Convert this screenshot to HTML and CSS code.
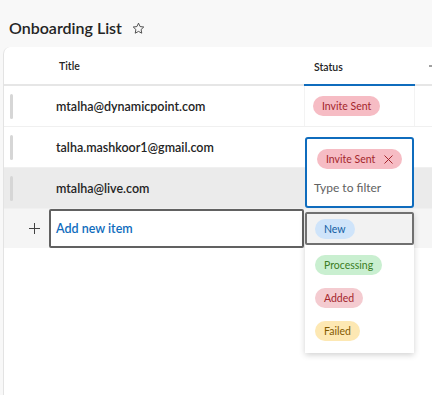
FILE: index.html
```html
<!DOCTYPE html>
<html lang="en">
<head>
  <meta charset="UTF-8">
  <title>Onboarding List</title>
  <link rel="stylesheet" href="styles.css">
</head>
<body>
  <div class="page-head">
    <h1>Onboarding List</h1>
    <svg class="star" width="13" height="13" viewBox="0 0 20 20">
      <path d="M10 1.8l2.45 5.2 5.65.7-4.15 3.9 1.05 5.6L10 14.45 4.95 17.2 6 11.6 1.9 7.7l5.65-.7z" fill="none" stroke="#424242" stroke-width="1.4" stroke-linejoin="round"/>
    </svg>
  </div>

  <div class="card">
    <div class="row head-row">
      <div class="cell"></div>
      <div class="cell col-title">Title</div>
      <div class="cell col-status active">Status</div>
      <div class="cell col-add">
        <svg width="12" height="12" viewBox="0 0 12 12"><path d="M6 0v12M0 6h12" stroke="#424242" stroke-width="1"/></svg>
      </div>
    </div>

    <div class="row">
      <div class="cell"><span class="sel-bar"></span></div>
      <div class="cell name">mtalha@dynamicpoint.com</div>
      <div class="cell status framed"><span class="pill pink">Invite Sent</span></div>
      <div class="cell"></div>
    </div>

    <div class="row">
      <div class="cell"><span class="sel-bar"></span></div>
      <div class="cell name">talha.mashkoor1@gmail.com</div>
      <div class="cell status"><span class="pill pink">Invite Sent</span></div>
      <div class="cell"></div>
    </div>

    <div class="row selected">
      <div class="cell"><span class="sel-bar"></span></div>
      <div class="cell name">mtalha@live.com</div>
      <div class="cell status"></div>
      <div class="cell"></div>
    </div>

    <div class="row add-row">
      <div class="cell plus">
        <svg width="11" height="11" viewBox="0 0 11 11"><path d="M5.5 0v11M0 5.5h11" stroke="#424242" stroke-width="1"/></svg>
      </div>
      <div class="cell add-box">Add new item</div>
      <div class="cell"></div>
      <div class="cell"></div>
    </div>

    <div class="picker">
      <div class="filter">
        <span class="pill pink">Invite Sent
          <svg class="x" width="9" height="9" viewBox="0 0 9 9"><path d="M.5.5l8 8M8.5.5l-8 8" stroke="#a4262c" stroke-width="1"/></svg>
        </span>
        <div class="placeholder">Type to filter</div>
      </div>
      <ul class="options">
        <li class="option focused"><span class="pill blue">New</span></li>
        <li class="option"><span class="pill green">Processing</span></li>
        <li class="option"><span class="pill rose">Added</span></li>
        <li class="option"><span class="pill yellow">Failed</span></li>
      </ul>
    </div>
  </div>
</body>
</html>
```

FILE: styles.css
```css
body {
  margin: 0;
  background-color: #f8f8f8;
  font-family: 'Segoe UI', Lato, sans-serif;
  color: #242424;
  height: 395px;
  overflow: hidden;
}
.page-head {
  display: flex;
  align-items: center;
  gap: 10px;
  height: 39px;
  padding: 8px 0 0 9px;
}
h1 {
  margin: 0;
  font-size: 16px;
  font-weight: 600;
}
.star {
  margin-top: 1px;
}
.card {
  position: relative;
  margin-left: 3px;
  height: 348px;
  background: white;
  border-left: 1px solid #e3e3e3;
  border-top-left-radius: 7px;
}
.row {
  display: grid;
  grid-template-columns: 46px 254px 111px 1fr;
  height: 40px;
  border-bottom: 1px solid #f0f0f0;
}
.cell {
  display: flex;
  align-items: center;
  font-size: 12.5px;
}
.head-row {
  height: 37px;
  border-bottom: 2px solid #e6e6e6;
}
.head-row .cell {
  font-size: 10.5px;
  font-weight: 600;
}
.col-title {
  padding-left: 9px;
}
.col-status {
  padding-left: 10px;
}
.col-status.active {
  box-shadow: inset 0 -2px 0 #0f6cbd;
  margin-bottom: -2px;
}
.col-add {
  padding-left: 14px;
}
.sel-bar {
  display: block;
  width: 3px;
  height: 25px;
  margin-left: 6px;
  border-radius: 2px;
  background: #d6d6d6;
}
.name {
  padding-left: 6px;
  font-weight: 600;
}
.status {
  padding-left: 8px;
}
.status.framed {
  border-left: 1px solid #f3f3f3;
  border-right: 1px solid #f3f3f3;
}
.row.selected {
  background: #ebebeb;
}
.add-row {
  background: #f5f5f5;
  border-bottom: none;
  height: 39px;
}
.plus {
  justify-content: center;
  padding-left: 14px;
}
.add-box {
  background: white;
  border: 2px solid #616161;
  border-radius: 2px;
  margin-left: -1px;
  padding-left: 5px;
  color: #0f6cbd;
  font-weight: 600;
}
.pill {
  display: inline-flex;
  align-items: center;
  height: 20px;
  padding: 0 9px;
  border-radius: 10px;
  font-size: 10.5px;
  white-space: nowrap;
}
.pink {
  background: #f6bcc4;
  color: #a4262c;
}
.blue {
  background: #cfe4fa;
  color: #115ea3;
}
.green {
  background: #c9efd0;
  color: #3b7d23;
}
.rose {
  background: #f4cbd0;
  color: #a4262c;
}
.yellow {
  background: #fde8b3;
  color: #835b00;
}
.x {
  margin-left: 9px;
}
.picker {
  position: absolute;
  left: 301px;
  top: 90px;
  width: 109px;
}
.filter {
  height: 71px;
  border: 2px solid #0f6cbd;
  border-radius: 3px;
  background: white;
  padding: 8px 0 0 10px;
  box-sizing: border-box;
}
.placeholder {
  margin: 11px 0 0 -3px;
  font-size: 12px;
  color: #616161;
}
.options {
  list-style: none;
  margin: 4px 0 0;
  padding: 0 0 6px;
  background: white;
  box-shadow: 0 2px 6px rgba(0,0,0,0.18);
}
.option {
  display: flex;
  align-items: center;
  height: 33px;
  padding-left: 10px;
}
.option.focused {
  margin-bottom: 3px;
  padding-left: 8px;
  background: #f2f2f2;
  border: 2px solid #707070;
  border-radius: 2px;
  box-sizing: border-box;
}
```
